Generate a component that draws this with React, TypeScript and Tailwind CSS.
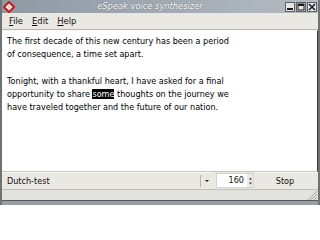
import React from 'react'

const font = { fontFamily: '"DejaVu Sans", Verdana, sans-serif' }

function TitleButton({ kind }: { kind: 'min' | 'max' | 'close' }) {
  return (
    <div className="w-[10px] h-[10px] bg-[#e6e6e6] border border-[#5c6168] flex items-center justify-center">
      <svg width="8" height="8" viewBox="0 0 8 8">
        {kind === 'min' && <rect x="1" y="5" width="6" height="2" fill="#1c1c1c" />}
        {kind === 'max' && (
          <rect x="1" y="1" width="6" height="6" fill="none" stroke="#1c1c1c" strokeWidth="1" />
        )}
        {kind === 'max' && <rect x="1" y="1" width="6" height="2" fill="#1c1c1c" />}
        {kind === 'close' && (
          <path d="M1 1 L7 7 M7 1 L1 7" stroke="#1c1c1c" strokeWidth="1.6" />
        )}
      </svg>
    </div>
  )
}

const lines: React.ReactNode[] = [
  'The first decade of this new century has been a period',
  'of consequence, a time set apart.',
  '\u00a0',
  'Tonight, with a thankful heart, I have asked for a final',
  <>
    opportunity to share <span className="bg-black text-white">some</span> thoughts on the journey we
  </>,
  'have traveled together and the future of our nation.',
]

export default function App() {
  return (
    <div
      className="w-[320px] h-[205px] flex flex-col bg-[#eae8e3] border-l-2 border-r-2 border-[#6f7276] overflow-hidden"
      style={font}
    >
      {/* title bar */}
      <div className="h-[13px] shrink-0 flex items-center bg-gradient-to-r from-[#8f99a4] via-[#a1aab3] to-[#b4bbc2] -mx-[2px] px-[2px]">
        <svg width="12" height="12" viewBox="0 0 12 12" className="ml-[1px]">
          <path d="M6 1 L11 6 L6 11 L1 6 Z" fill="#fff" stroke="#d21818" strokeWidth="2" />
          <rect x="4.6" y="4.6" width="2.8" height="2.8" fill="#f4c8c8" transform="rotate(45 6 6)" />
        </svg>
        <div className="flex-1 text-center italic text-white text-[8.3px] [text-shadow:0_0_1px_#4a5058]">
          eSpeak voice synthesizer
        </div>
        <div className="flex gap-px mr-[1px]">
          <TitleButton kind="min" />
          <TitleButton kind="max" />
          <TitleButton kind="close" />
        </div>
      </div>

      {/* menu bar */}
      <div className="h-[17px] shrink-0 flex items-center gap-[9px] pl-[7px] pt-[1px] text-[8.4px] text-[#111] border-b border-[#b9b6b0]">
        <span><u>F</u>ile</span>
        <span><u>E</u>dit</span>
        <span><u>H</u>elp</span>
      </div>

      {/* text area */}
      <div className="flex-1 bg-white border-t border-[#f7f6f4] border-b border-b-[#c9c6c0] border-r border-r-[#3c3c3c] pl-[5px] pt-[4px] text-[8.1px] leading-[13.3px] text-black">
        {lines.map((l, i) => (
          <div key={i} className="whitespace-pre">
            {l}
          </div>
        ))}
      </div>

      {/* control row */}
      <div className="h-[18px] shrink-0 flex items-stretch text-[8.1px] text-[#111] border-b border-[#c2bfb9]">
        <div className="w-[211px] flex items-center border-t border-[#f8f7f5]">
          <span className="flex-1 pl-[5px]">Dutch-test</span>
          <div className="w-px h-[12px] bg-[#b8b5af]" />
          <svg width="10" height="6" viewBox="0 0 10 6" className="mx-[1px]">
            <path d="M3 2 L7 2 L5 4 Z" fill="#222" />
          </svg>
        </div>
        <div className="w-[38px] flex items-center bg-white ml-[3px] my-[1px] border border-[#d6d3ce]">
          <span className="flex-1 text-right pr-[3px]">160</span>
          <div className="w-[6px] flex flex-col items-center gap-[2px] bg-[#ebe9e5] self-stretch justify-center">
            <svg width="5" height="3" viewBox="0 0 5 3"><path d="M1 2.5 L4 2.5 L2.5 0.5 Z" fill="#333" /></svg>
            <svg width="5" height="3" viewBox="0 0 5 3"><path d="M1 0.5 L4 0.5 L2.5 2.5 Z" fill="#333" /></svg>
          </div>
        </div>
        <div className="flex-1 flex items-center justify-center border-t border-[#f8f7f5] pr-[2px]">
          Stop
        </div>
      </div>

      {/* status bar */}
      <div className="h-[11px] shrink-0 flex justify-end items-end bg-[#e4e2dd] border-b border-[#55585c]">
        <svg width="11" height="10" viewBox="0 0 11 10">
          <path d="M10 1 L1 10 M10 4 L4 10 M10 7 L7 10" stroke="#a7a49e" strokeWidth="1" />
        </svg>
      </div>
      <div className="h-[4px] shrink-0 bg-[#9a9da1] -mx-[2px]" />
    </div>
  )
}
